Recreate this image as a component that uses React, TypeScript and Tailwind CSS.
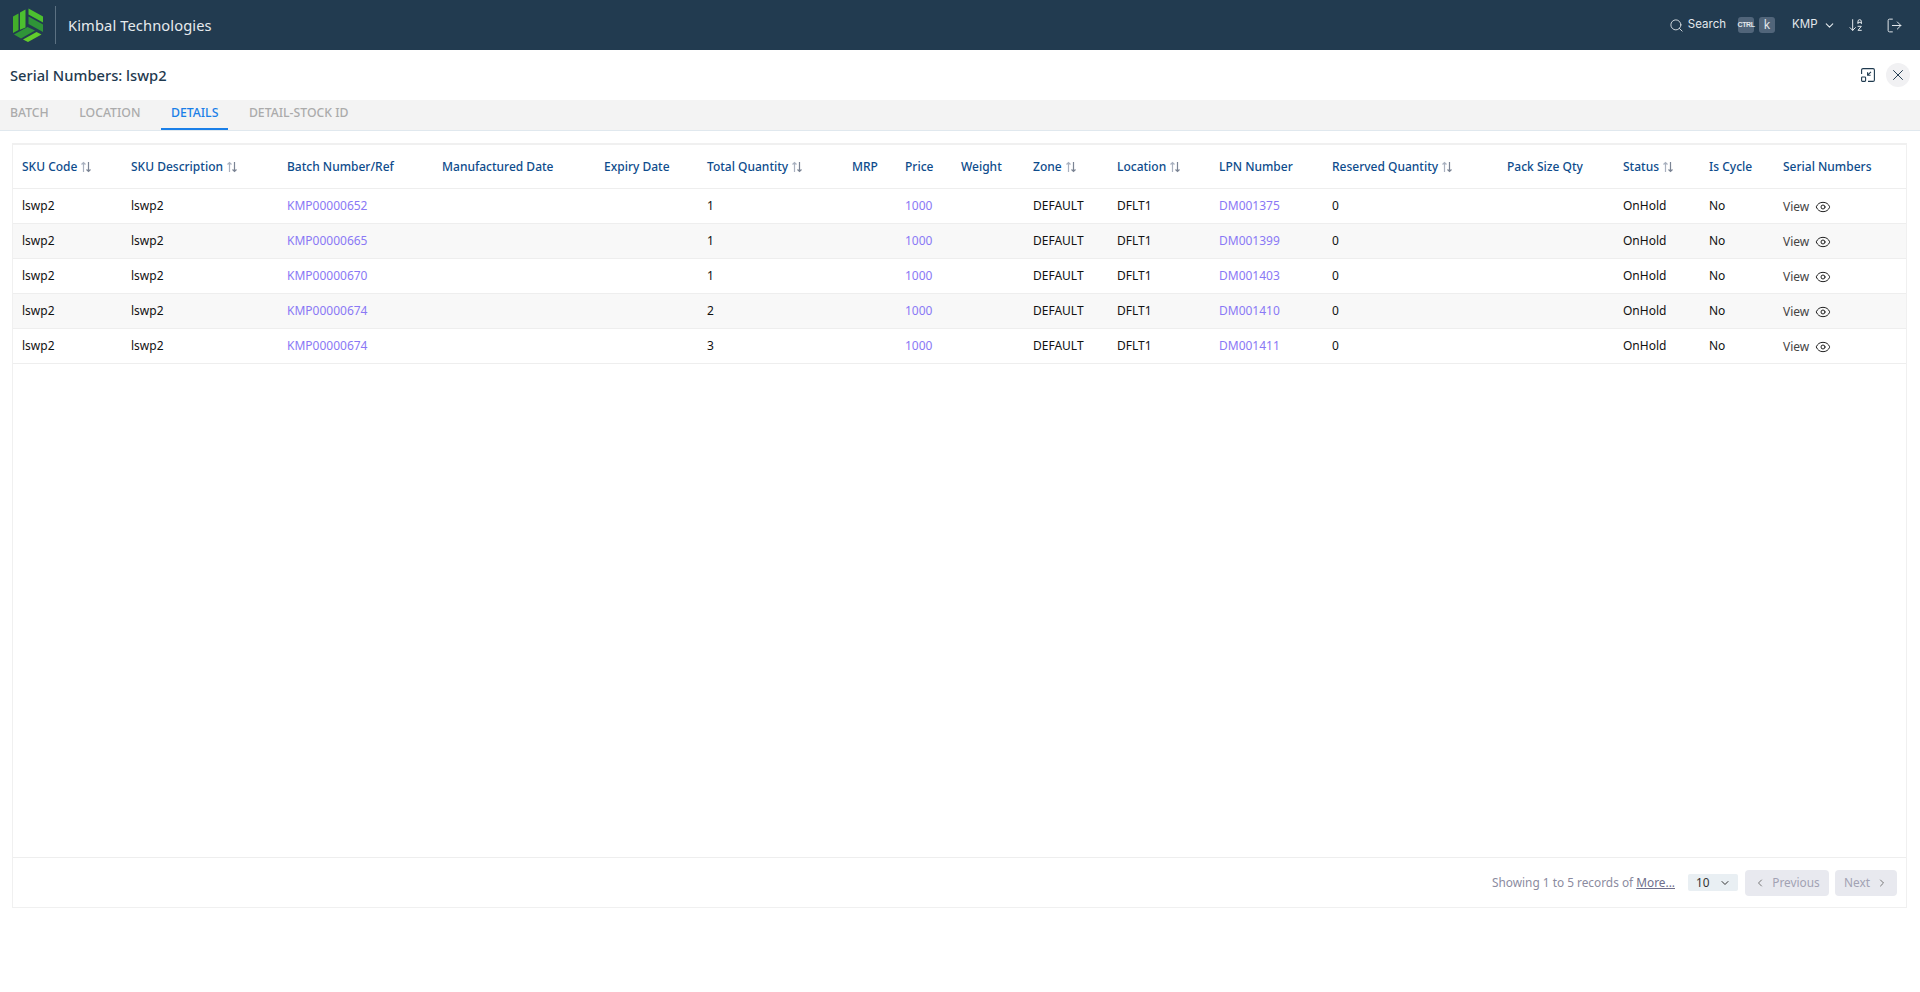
import { ArrowDownAZ, ChevronDown, ChevronLeft, ChevronRight, Eye, LogOut, Search, X } from "lucide-react";

type Row = { batch: string; qty: string; lpn: string };

const rows: Row[] = [
  { batch: "KMP00000652", qty: "1", lpn: "DM001375" },
  { batch: "KMP00000665", qty: "1", lpn: "DM001399" },
  { batch: "KMP00000670", qty: "1", lpn: "DM001403" },
  { batch: "KMP00000674", qty: "2", lpn: "DM001410" },
  { batch: "KMP00000674", qty: "3", lpn: "DM001411" },
];

const columns = [
  { label: "SKU Code", width: 109, sort: true },
  { label: "SKU Description", width: 156, sort: true },
  { label: "Batch Number/Ref", width: 155 },
  { label: "Manufactured Date", width: 162 },
  { label: "Expiry Date", width: 103 },
  { label: "Total Quantity", width: 145, sort: true },
  { label: "MRP", width: 53 },
  { label: "Price", width: 56 },
  { label: "Weight", width: 72 },
  { label: "Zone", width: 84, sort: true },
  { label: "Location", width: 102, sort: true },
  { label: "LPN Number", width: 113 },
  { label: "Reserved Quantity", width: 175, sort: true },
  { label: "Pack Size Qty", width: 116 },
  { label: "Status", width: 86, sort: true },
  { label: "Is Cycle", width: 74 },
  { label: "Serial Numbers", width: 132 },
];

const tabs = ["BATCH", "LOCATION", "DETAILS", "DETAIL-STOCK ID"];

function Logo() {
  return (
    <svg width="32" height="36" viewBox="0 0 32 36" className="shrink-0">
      <path d="M1 9.5 L6.5 6.5 V23 L1 26 Z" fill="#43b02a" />
      <path d="M8 5.6 L13.5 2.6 V20.5 L8 22.8 Z" fill="#4cc02f" />
      <path d="M16.5 1.5 L31 9.5 V15.5 L16.5 7.5 Z" fill="#4cc02f" />
      <path d="M16.5 9.5 L31 17.5 V25 L16.5 17 Z" fill="#2f9438" />
      <path d="M2 27.5 L15.5 20 L23 23.5 L9 31.5 Z" fill="#2f9438" />
      <path d="M11 32.5 L24.5 25 L29.5 27.5 L16 35 Z" fill="#62cc2c" />
    </svg>
  );
}

function SortIcon() {
  return (
    <svg width="12" height="12" viewBox="0 0 12 12" fill="none" strokeWidth="1.2" className="ml-[3px] shrink-0">
      <path d="M3.5 11V1.5M1.5 3.5l2-2 2 2" stroke="#a9b1bf" />
      <path d="M8.5 1v9.5M6.5 8.5l2 2 2-2" stroke="#7b8494" />
    </svg>
  );
}

function ShrinkIcon() {
  return (
    <svg width="14" height="14" viewBox="0 0 14 14" fill="none" stroke="#1f3a4f" strokeWidth="1.1">
      <path d="M0.6 6V2a1.4 1.4 0 0 1 1.4-1.4h10A1.4 1.4 0 0 1 13.4 2v10a1.4 1.4 0 0 1-1.4 1.4H7" />
      <rect x="0.6" y="9" width="4" height="4.4" rx="0.8" />
      <path d="M10 3.8L6.6 7.2M6.6 4.2v3h3" />
    </svg>
  );
}

export default function App() {
  return (
    <div className="flex h-screen w-full flex-col overflow-hidden bg-white font-['Noto_Sans',sans-serif] text-[12px] text-[#111]">
      {/* top bar */}
      <header className="flex h-[50px] shrink-0 items-center bg-[#223b50] pl-3 pr-[17px] text-[#e3e8ec]">
        <Logo />
        <div className="ml-[11px] h-[38px] w-px bg-[#5c7182]" />
        <span className="ml-3 text-[14.7px] tracking-[0.1px] text-[#e6eaed]">Kimbal Technologies</span>
        <div className="ml-auto flex items-center font-['Inter',sans-serif] text-[11.5px]">
          <Search size={15} strokeWidth={1.4} />
          <span className="ml-[4px]">Search</span>
          <kbd className="ml-[12px] flex h-4 w-4 items-center justify-center rounded-[3px] bg-[#51657a] font-['Liberation_Sans',sans-serif] text-[7px] font-bold tracking-[-0.4px]">CTRL</kbd>
          <kbd className="ml-[5px] flex h-4 w-4 items-center justify-center rounded-[3px] bg-[#51657a] font-['Noto_Sans',sans-serif] text-[12px]">k</kbd>
          <span className="ml-[17px]">KMP</span>
          <ChevronDown size={13} className="ml-[5px]" />
          <ArrowDownAZ size={16} strokeWidth={1.5} className="ml-[12.5px]" />
          <LogOut size={17} strokeWidth={1.4} className="ml-[22px]" />
        </div>
      </header>

      {/* title */}
      <div className="flex h-[50px] shrink-0 items-center pl-[10px] pr-[10px]">
        <h1 className="pt-px text-[14.7px] font-medium text-[#1f3a4f]">Serial Numbers: lswp2</h1>
        <div className="ml-auto flex items-center gap-[11px]">
          <ShrinkIcon />
          <button className="flex h-6 w-6 items-center justify-center rounded-full bg-[#f1f1f3] text-[#1f3a4f]">
            <X size={18} strokeWidth={1.3} />
          </button>
        </div>
      </div>

      {/* tabs */}
      <div className="flex h-[31px] shrink-0 items-stretch gap-[10.5px] border-b border-[#e0e8ee] bg-[#f3f3f3]">
        {tabs.map((tab) => (
          <div
            key={tab}
            className={
              tab === "DETAILS"
                ? "flex items-center border-b-2 border-[#1a7fe8] px-[10px] pb-px text-[12.25px] font-medium text-[#1a7fe8]"
                : "flex items-center px-[10px] pb-[3px] text-[12.25px] font-medium text-[#ababab]"
            }
          >
            {tab}
          </div>
        ))}
      </div>

      {/* table card */}
      <div className="ml-3 mr-[13px] mt-[12px] flex h-[765px] shrink-0 flex-col border-2 border-[#f0f0f0] border-b-[1px] border-l-[1px] border-r-[1px]">
        <div className="flex-1">
          <table className="w-full table-fixed border-collapse">
            <colgroup>
              {columns.map((col) => (
                <col key={col.label} style={{ width: col.width }} />
              ))}
            </colgroup>
            <thead>
              <tr className="h-[43px] border-b border-[#eeeeee]">
                {columns.map((col) => (
                  <th key={col.label} className="px-[9px] pt-px text-left text-[12px] font-medium whitespace-nowrap text-[#0e4c8c]">
                    <span className="flex items-center">
                      {col.label}
                      {col.sort && <SortIcon />}
                    </span>
                  </th>
                ))}
              </tr>
            </thead>
            <tbody>
              {rows.map((row, i) => (
                <tr key={row.lpn} className={i % 2 === 1 ? "h-[35px] border-b border-[#eeeeee] bg-[#f8f8f8]" : "h-[35px] border-b border-[#eeeeee]"}>
                  <td className="px-[9px]">lswp2</td>
                  <td className="px-[9px]">lswp2</td>
                  <td className="px-[9px] text-[#8a78f5]">{row.batch}</td>
                  <td className="px-[9px]" />
                  <td className="px-[9px]" />
                  <td className="px-[9px]">{row.qty}</td>
                  <td className="px-[9px]" />
                  <td className="px-[9px] text-[#8a78f5]">1000</td>
                  <td className="px-[9px]" />
                  <td className="px-[9px]">DEFAULT</td>
                  <td className="px-[9px]">DFLT1</td>
                  <td className="px-[9px] text-[#8a78f5]">{row.lpn}</td>
                  <td className="px-[9px]">0</td>
                  <td className="px-[9px]" />
                  <td className="px-[9px]">OnHold</td>
                  <td className="px-[9px]">No</td>
                  <td className="px-[9px] text-[#444]">
                    <span className="flex items-center gap-[6px] pt-[2px]">
                      View <Eye size={16} strokeWidth={1.5} className="text-[#222]" />
                    </span>
                  </td>
                </tr>
              ))}
            </tbody>
          </table>
        </div>

        {/* pager */}
        <div className="flex h-[50px] shrink-0 items-center justify-end border-t border-[#eeeeee] pr-[9px] text-[11.85px] text-[#8b8ba0]">
          <span>
            Showing 1 to 5 records of <span className="text-[#6f6f8c] underline">More...</span>
          </span>
          <div className="ml-[13px] flex h-[17px] w-[50px] items-center rounded-[2px] bg-[#e9eff3] pl-2 text-[#333]">
            10
            <ChevronDown size={12} className="ml-[9px]" />
          </div>
          <button className="ml-[7px] flex h-[26px] w-[84px] items-center justify-center gap-[6px] rounded-[4px] bg-[#e8e9ef] text-[#a2a2b3]">
            <ChevronLeft size={12} className="text-[#777]" /> Previous
          </button>
          <button className="ml-[6px] flex h-[26px] w-[62px] items-center justify-center gap-[6px] rounded-[4px] bg-[#e8e9ef] text-[#a2a2b3]">
            Next <ChevronRight size={12} className="text-[#777]" />
          </button>
        </div>
      </div>
    </div>
  );
}
